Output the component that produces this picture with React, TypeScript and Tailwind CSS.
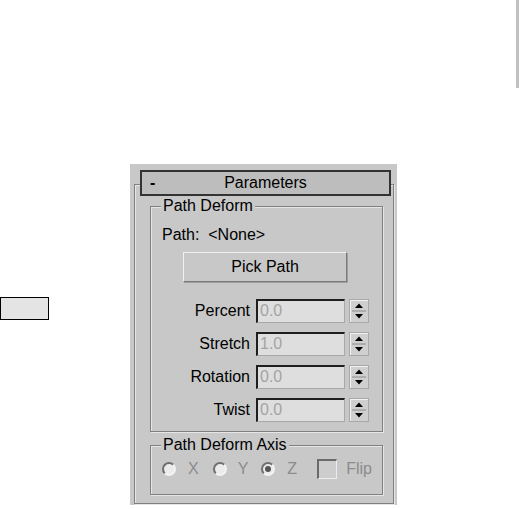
const font = "font-['Liberation_Sans',Arial,sans-serif]";

function Spinner() {
  return (
    <svg width="20" height="24" viewBox="0 0 20 24" className="shrink-0">
      <rect x="0.5" y="0.5" width="19" height="23" fill="#cfcfcf" stroke="#a8a8a8" />
      <line x1="1" y1="1.5" x2="19" y2="1.5" stroke="#f2f2f2" />
      <line x1="1.5" y1="1" x2="1.5" y2="23" stroke="#f2f2f2" />
      <line x1="3" y1="12" x2="17" y2="12" stroke="#8a8a8a" />
      <polygon points="6,9 14,9 10,4.5" fill="#000" />
      <polygon points="6,15 14,15 10,19.5" fill="#000" />
    </svg>
  );
}

function SpinnerRow({ label, value }: { label: string; value: string }) {
  return (
    <div className="flex items-center h-[24px]">
      <div className="w-[99px] text-right text-black">{label}</div>
      <div className="ml-[6px] w-[89px] h-[24px] border-t-2 border-l-2 border-r border-b border-t-[#1e1e1e] border-l-[#1e1e1e] border-r-[#a8a8a8] border-b-[#a8a8a8] bg-[#dedede] pl-[2px] leading-[20px] text-[#a4a4a4]">
        {value}
      </div>
      <div className="ml-[4px]">
        <Spinner />
      </div>
    </div>
  );
}

function Radio({ checked }: { checked?: boolean }) {
  return (
    <div className="w-[14px] h-[14px] shrink-0 rounded-full border-2 border-t-[#707070] border-l-[#707070] border-b-[#f2f2f2] border-r-[#f2f2f2] bg-[#ebebeb] flex items-center justify-center">
      {checked && <div className="w-[6px] h-[6px] rounded-full bg-[#555]" />}
    </div>
  );
}

function Group({ title, className, children }: { title: string; className: string; children: React.ReactNode }) {
  return (
    <div className={`relative border border-[#808080] shadow-[inset_1px_1px_0_#e6e6e6,1px_1px_0_#e6e6e6] ${className}`}>
      <div className="absolute -top-[10px] left-[10px] px-[2px] bg-[#c8c8c8] leading-[18px] text-black">{title}</div>
      {children}
    </div>
  );
}

export default function App() {
  return (
    <div className={`w-[519px] h-[509px] bg-white flex items-start overflow-hidden text-[16px] leading-[18px] ${font}`}>
      <div className="w-[130px] shrink-0 pt-[297px]">
        <div className="w-[49px] h-[23px] border border-black bg-[#e4e4e4]" />
      </div>

      <div className="mt-[164px] w-[267px] h-[341px] shrink-0 bg-[#c8c8c8] pt-[6px] flex flex-col">
        <div className="relative z-10 ml-[10px] mr-[6px] h-[26px] border-2 border-[#333] bg-[#bdbdbd] flex items-center">
          <span className="pl-[8px] w-[20px] font-bold">-</span>
          <span className="flex-1 text-center pr-[20px]">Parameters</span>
        </div>

        <div className="ml-[4px] mr-[3px] -mt-[12px] h-[320px] border border-[#808080] shadow-[inset_1px_1px_0_#e6e6e6,1px_1px_0_#e6e6e6] pt-[21px] pl-[15px] pr-[10px]">
          <Group title="Path Deform" className="h-[226px]">
            <div className="pl-[11px] pt-[19px]">Path:&nbsp; &lt;None&gt;</div>
            <div className="ml-[32px] mt-[8px] w-[164px] h-[30px] border border-t-[#f0f0f0] border-l-[#f0f0f0] border-r-[#7a7a7a] border-b-[#7a7a7a] shadow-[1px_1px_0_#a0a0a0] flex items-center justify-center">
              Pick Path
            </div>
            <div className="mt-[17px] flex flex-col gap-[9px]">
              <SpinnerRow label="Percent" value="0.0" />
              <SpinnerRow label="Stretch" value="1.0" />
              <SpinnerRow label="Rotation" value="0.0" />
              <SpinnerRow label="Twist" value="0.0" />
            </div>
          </Group>

          <Group title="Path Deform Axis" className="mt-[13px] h-[50px]">
            <div className="pt-[13px] pl-[11px] flex items-center h-[33px] text-[#8c8c8c]">
              <Radio />
              <span className="ml-[12px]">X</span>
              <span className="ml-[14px]"><Radio /></span>
              <span className="ml-[11px]">Y</span>
              <span className="ml-[13px]"><Radio checked /></span>
              <span className="ml-[12px]">Z</span>
              <div className="ml-[20px] w-[20px] h-[20px] border-t-2 border-l-2 border-b border-r border-t-[#6a6a6a] border-l-[#6a6a6a] border-b-[#ececec] border-r-[#ececec] bg-[#cdcdcd]" />
              <span className="ml-[9px]">Flip</span>
            </div>
          </Group>
        </div>
      </div>

      <div className="ml-auto w-[3px] h-[88px] bg-[#c0c0c0]" />
    </div>
  );
}
